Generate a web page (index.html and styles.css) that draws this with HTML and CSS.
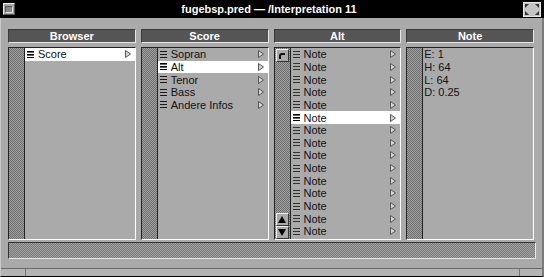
FILE: index.html
```html
<!DOCTYPE html>
<html lang="de">
<head>
  <meta charset="UTF-8" />
  <title>fugebsp.pred — /Interpretation 11</title>
  <link rel="stylesheet" href="styles.css">
</head>
<body>
  <div class="window">
    <div class="titlebar">
      <span class="menu-btn"><span></span></span>
      <span class="title">fugebsp.pred — /Interpretation 11</span>
      <span class="max-btn">
        <svg width="16" height="13" viewBox="0 0 16 13">
          <path d="M1 1h4L1 5z M15 1h-4l4 4z M1 12h4L1 8z M15 12h-4l4-4z" fill="#333"/>
        </svg>
      </span>
    </div>

    <div class="columns">
      <div class="column">
        <div class="col-head">Browser</div>
        <div class="list">
          <div class="gutter"></div>
          <ul class="rows">
            <li class="sel"><i class="lines"></i>Score<svg class="arrow" viewBox="0 0 6 8"><path d="M.5 .5 5.5 4 .5 7.5z"/></svg></li>
          </ul>
        </div>
      </div>

      <div class="column">
        <div class="col-head">Score</div>
        <div class="list">
          <div class="gutter"></div>
          <ul class="rows">
            <li><i class="lines"></i>Sopran<svg class="arrow" viewBox="0 0 6 8"><path d="M.5 .5 5.5 4 .5 7.5z"/></svg></li>
            <li class="sel"><i class="lines"></i>Alt<svg class="arrow" viewBox="0 0 6 8"><path d="M.5 .5 5.5 4 .5 7.5z"/></svg></li>
            <li><i class="lines"></i>Tenor<svg class="arrow" viewBox="0 0 6 8"><path d="M.5 .5 5.5 4 .5 7.5z"/></svg></li>
            <li><i class="lines"></i>Bass<svg class="arrow" viewBox="0 0 6 8"><path d="M.5 .5 5.5 4 .5 7.5z"/></svg></li>
            <li><i class="lines"></i>Andere Infos<svg class="arrow" viewBox="0 0 6 8"><path d="M.5 .5 5.5 4 .5 7.5z"/></svg></li>
          </ul>
        </div>
      </div>

      <div class="column">
        <div class="col-head">Alt</div>
        <div class="list">
          <div class="gutter scroll">
            <span class="sbtn"><svg width="8" height="8" viewBox="0 0 8 8"><path d="M1 7V4a3 3 0 0 1 3-3h3v2H4a1 1 0 0 0-1 1v3z" fill="#111"/></svg></span>
            <span class="arrows">
              <span class="sbtn"><svg width="8" height="7" viewBox="0 0 8 7"><path d="M4 0 8 7H0z" fill="#000"/></svg></span>
              <span class="sbtn"><svg width="8" height="7" viewBox="0 0 8 7"><path d="M0 0h8L4 7z" fill="#000"/></svg></span>
            </span>
          </div>
          <ul class="rows thin">
            <li><i class="lines"></i>Note<svg class="arrow" viewBox="0 0 6 8"><path d="M.5 .5 5.5 4 .5 7.5z"/></svg></li>
            <li><i class="lines"></i>Note<svg class="arrow" viewBox="0 0 6 8"><path d="M.5 .5 5.5 4 .5 7.5z"/></svg></li>
            <li><i class="lines"></i>Note<svg class="arrow" viewBox="0 0 6 8"><path d="M.5 .5 5.5 4 .5 7.5z"/></svg></li>
            <li><i class="lines"></i>Note<svg class="arrow" viewBox="0 0 6 8"><path d="M.5 .5 5.5 4 .5 7.5z"/></svg></li>
            <li><i class="lines"></i>Note<svg class="arrow" viewBox="0 0 6 8"><path d="M.5 .5 5.5 4 .5 7.5z"/></svg></li>
            <li class="sel"><i class="lines"></i>Note<svg class="arrow" viewBox="0 0 6 8"><path d="M.5 .5 5.5 4 .5 7.5z"/></svg></li>
            <li><i class="lines"></i>Note<svg class="arrow" viewBox="0 0 6 8"><path d="M.5 .5 5.5 4 .5 7.5z"/></svg></li>
            <li><i class="lines"></i>Note<svg class="arrow" viewBox="0 0 6 8"><path d="M.5 .5 5.5 4 .5 7.5z"/></svg></li>
            <li><i class="lines"></i>Note<svg class="arrow" viewBox="0 0 6 8"><path d="M.5 .5 5.5 4 .5 7.5z"/></svg></li>
            <li><i class="lines"></i>Note<svg class="arrow" viewBox="0 0 6 8"><path d="M.5 .5 5.5 4 .5 7.5z"/></svg></li>
            <li><i class="lines"></i>Note<svg class="arrow" viewBox="0 0 6 8"><path d="M.5 .5 5.5 4 .5 7.5z"/></svg></li>
            <li><i class="lines"></i>Note<svg class="arrow" viewBox="0 0 6 8"><path d="M.5 .5 5.5 4 .5 7.5z"/></svg></li>
            <li><i class="lines"></i>Note<svg class="arrow" viewBox="0 0 6 8"><path d="M.5 .5 5.5 4 .5 7.5z"/></svg></li>
            <li><i class="lines"></i>Note<svg class="arrow" viewBox="0 0 6 8"><path d="M.5 .5 5.5 4 .5 7.5z"/></svg></li>
            <li><i class="lines"></i>Note<svg class="arrow" viewBox="0 0 6 8"><path d="M.5 .5 5.5 4 .5 7.5z"/></svg></li>
          </ul>
        </div>
      </div>

      <div class="column">
        <div class="col-head">Note</div>
        <div class="list">
          <div class="gutter"></div>
          <ul class="rows plain">
            <li>E: 1</li>
            <li>H: 64</li>
            <li>L: 64</li>
            <li>D: 0.25</li>
          </ul>
        </div>
      </div>
    </div>

    <div class="status"></div>

    <div class="footer">
      <span class="cell first"></span>
      <span class="cell mid"></span>
      <span class="cell last"></span>
    </div>
  </div>
</body>
</html>
```

FILE: styles.css
```css
body {
  margin: 0;
  padding: 0;
  background: #000;
  font-family: "Liberation Sans", Arial, sans-serif;
  font-size: 11px;
  color: #111;
}
.window {
  width: 544px;
  height: 277px;
  box-sizing: border-box;
  background: #aaaaaa;
  border-left: 1px solid #c8c8c8;
  border-right: 2px solid #7a7a7a;
  border-bottom: 1px solid #000;
  display: flex;
  flex-direction: column;
}

/* title bar */
.titlebar {
  height: 18px;
  margin: 0 -2px 0 -1px;
  background: #000;
  display: flex;
  align-items: center;
  position: relative;
}
.title {
  flex: 1;
  text-align: center;
  color: #fff;
  font-weight: bold;
  font-size: 11px;
}
.menu-btn {
  width: 10px;
  height: 10px;
  margin-left: 3px;
  background: #aaa;
  border: 1px solid;
  border-color: #eee #555 #555 #eee;
  display: flex;
  align-items: center;
  justify-content: center;
}
.menu-btn span {
  width: 6px;
  height: 5px;
  background: #888;
  border: 1px solid;
  border-color: #555 #ddd #ddd #555;
}
.max-btn {
  width: 16px;
  height: 13px;
  margin-right: 3px;
  background: #c4c4c4;
  border: 1px solid #e8e8e8;
  display: flex;
}

/* columns */
.columns {
  display: flex;
  gap: 5px;
  padding: 11px 8px 0 7px;
}
.column {
  width: 128px;
  display: flex;
  flex-direction: column;
}
.col-head {
  height: 14px;
  box-sizing: border-box;
  background: #555;
  border: 1px solid;
  border-color: #3a3a3a #e6e6e6 #e6e6e6 #3a3a3a;
  color: #fff;
  font-weight: bold;
  text-align: center;
  line-height: 12px;
  margin-bottom: 4px;
}
.list {
  height: 193px;
  box-sizing: border-box;
  border: 1px solid;
  border-color: #222 #fff #fff #222;
  display: flex;
}
.gutter {
  width: 15px;
  flex: none;
  border-right: 1px solid #222;
  background: repeating-conic-gradient(#6f6f6f 0 25%, #a0a0a0 0 50%) 0 0 / 2px 2px;
}
.gutter.scroll {
  display: flex;
  flex-direction: column;
  justify-content: space-between;
  align-items: center;
  padding: 1px 0 0;
}
.arrows {
  display: flex;
  flex-direction: column;
}
.sbtn {
  width: 11px;
  height: 11px;
  background: #aaa;
  border: 1px solid;
  border-color: #f0f0f0 #333 #333 #f0f0f0;
  display: flex;
  align-items: center;
  justify-content: center;
}
.rows {
  list-style: none;
  margin: 0;
  padding: 0;
  flex: 1;
}
.rows li {
  height: 12.65px;
  display: flex;
  align-items: center;
  padding-left: 2px;
  white-space: nowrap;
}
.rows li.sel {
  background: #fff;
}
.lines {
  width: 7px;
  height: 7px;
  margin-right: 4px;
  background: repeating-linear-gradient(#1a1a1a 0 1px, transparent 1px 3px);
}
.rows.thin .lines {
  background: repeating-linear-gradient(#333 0 1px, transparent 1px 3px);
}
.rows li.sel .lines {
  background: repeating-linear-gradient(#000 0 1px, #666 1px 2px, transparent 2px 3px);
}
.arrow {
  width: 6px;
  height: 8px;
  margin-left: auto;
  margin-right: 4px;
  fill: #d6d6d6;
  stroke: #555;
  stroke-width: 1;
}
.rows.plain li {
  padding-left: 1px;
}

/* status + footer */
.status {
  height: 17px;
  box-sizing: border-box;
  margin: 2px 6px 0 7px;
  border: 1px solid;
  border-color: #333 #e6e6e6 #e6e6e6 #333;
  background: repeating-conic-gradient(#7a7a7a 0 25%, #a3a3a3 0 50%) 0 0 / 2px 2px;
}
.footer {
  margin-top: auto;
  height: 7px;
  border-top: 1px solid #6a6a6a;
  background: #b4b4b4;
  display: flex;
}
.cell.first {
  width: 24px;
  border-right: 1px solid #777;
}
.cell.mid {
  flex: 1;
  border-right: 1px solid #777;
}
.cell.last {
  width: 22px;
}
```
